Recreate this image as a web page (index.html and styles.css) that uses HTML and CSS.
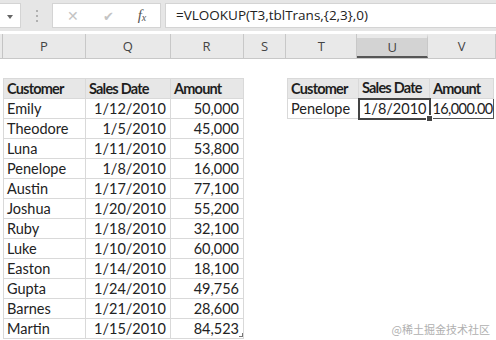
FILE: index.html
```html
<!DOCTYPE html>
<html lang="en">
<head>
  <meta charset="UTF-8" />
  <title>VLOOKUP sheet</title>
  <link rel="stylesheet" href="styles.css">
</head>
<body>
  <div class="formula-bar">
    <div class="name-box"><span class="arrow"></span></div>
    <div class="grip"><i></i><i></i><i></i></div>
    <div class="buttons">
      <span class="btn cancel">&#x2715;</span>
      <span class="btn enter">&#x2714;</span>
      <span class="btn fx">f<sub>x</sub></span>
    </div>
    <div class="formula">=VLOOKUP(T3,tblTrans,{2,3},0)</div>
  </div>

  <div class="col-heads">
    <div class="corner"></div>
    <div class="col w-p">P</div>
    <div class="col w-q">Q</div>
    <div class="col w-r">R</div>
    <div class="col w-s">S</div>
    <div class="col w-t">T</div>
    <div class="col w-u active">U</div>
    <div class="col w-v">V</div>
  </div>

  <div class="sheet">
    <table class="data left">
      <colgroup><col class="c-p"><col class="c-q"><col class="c-r"></colgroup>
      <tr><th>Customer</th><th>Sales Date</th><th>Amount</th></tr>
      <tr><td>Emily</td><td class="num">1/12/2010</td><td class="num">50,000</td></tr>
      <tr><td>Theodore</td><td class="num">1/5/2010</td><td class="num">45,000</td></tr>
      <tr><td>Luna</td><td class="num">1/11/2010</td><td class="num">53,800</td></tr>
      <tr><td>Penelope</td><td class="num">1/8/2010</td><td class="num">16,000</td></tr>
      <tr><td>Austin</td><td class="num">1/17/2010</td><td class="num">77,100</td></tr>
      <tr><td>Joshua</td><td class="num">1/20/2010</td><td class="num">55,200</td></tr>
      <tr><td>Ruby</td><td class="num">1/18/2010</td><td class="num">32,100</td></tr>
      <tr><td>Luke</td><td class="num">1/10/2010</td><td class="num">60,000</td></tr>
      <tr><td>Easton</td><td class="num">1/14/2010</td><td class="num">18,100</td></tr>
      <tr><td>Gupta</td><td class="num">1/24/2010</td><td class="num">49,756</td></tr>
      <tr><td>Barnes</td><td class="num">1/21/2010</td><td class="num">28,600</td></tr>
      <tr><td>Martin</td><td class="num">1/15/2010</td><td class="num">84,523<span class="resize"></span></td></tr>
    </table>

    <table class="data right">
      <colgroup><col class="c-t"><col class="c-u"><col class="c-v"></colgroup>
      <tr><th>Customer</th><th>Sales Date</th><th>Amount</th></tr>
      <tr><td>Penelope</td><td class="num selected">1/8/2010<span class="handle"></span></td><td class="num result">16,000.00</td></tr>
    </table>
  </div>

  <div class="watermark">@稀土掘金技术社区</div>
</body>
</html>
```

FILE: styles.css
```css
body {
  margin: 0;
  width: 496px;
  height: 340px;
  overflow: hidden;
  background: #fff;
  font-family: "Lato", "Liberation Sans", sans-serif;
  color: #222;
  position: relative;
}
.formula-bar {
  display: flex;
  align-items: stretch;
  height: 25px;
  padding: 3px 0 3px;
  background: #e6e6e6;
}
.name-box {
  width: 20px;
  background: #fff;
  border: 1px solid #d4d4d4;
  border-left: none;
  position: relative;
}
.arrow {
  position: absolute;
  left: 7px;
  top: 11px;
  border-left: 3px solid transparent;
  border-right: 3px solid transparent;
  border-top: 4px solid #666;
}
.grip {
  width: 31px;
  display: flex;
  flex-direction: column;
  align-items: center;
  justify-content: center;
  gap: 3px;
}
.grip i {
  width: 2px;
  height: 2px;
  background: #b0b0b0;
}
.buttons {
  width: 107px;
  background: #fff;
  border: 1px solid #d4d4d4;
  display: flex;
  align-items: center;
}
.btn {
  color: #c4c4c4;
  text-align: center;
}
.cancel { width: 36px; margin-left: 2px; font-size: 14px; }
.enter { width: 34px; font-size: 13px; }
.fx {
  width: 34px;
  color: #555;
  font-family: "Liberation Serif", serif;
  font-style: italic;
  font-size: 15px;
}
.fx sub { font-size: 10px; vertical-align: -1px; }
.formula {
  flex: 1;
  margin-left: 4px;
  background: #fff;
  border: 1px solid #d4d4d4;
  border-right: none;
  padding-left: 10px;
  line-height: 23px;
  font-family: "Open Sans", sans-serif;
  font-size: 13.5px;
  color: #222;
}
.col-heads {
  display: flex;
  height: 24px;
  margin-top: 3px;
  background: #e9e9e9;
  border-bottom: 1px solid #c8c8c8;
}
.corner { width: 3px; border-right: 1px solid #c4c4c4; box-sizing: border-box; }
.col {
  box-sizing: border-box;
  border-right: 1px solid #c8c8c8;
  text-align: center;
  line-height: 24px;
  font-family: "Open Sans", sans-serif;
  font-size: 13px;
  color: #444;
}
.col.active {
  background: #d3d3d3;
  border-bottom: 2px solid #555;
  border-top: 4px solid #e9e9e9;
  line-height: 18px;
}
.w-p { width: 83px; }
.w-q { width: 85px; }
.w-r { width: 73px; }
.w-s { width: 43px; }
.w-t { width: 71px; }
.w-u { width: 71px; }
.w-v { width: 68px; }
.sheet {
  display: flex;
  align-items: flex-start;
  padding: 19px 0 0 3px;
  gap: 43px;
}
.data {
  border-collapse: collapse;
  table-layout: fixed;
  font-size: 14.5px;
  flex: none;
}
.left { width: 240px; }
.right { width: 206px; }
.c-p { width: 82px; }
.c-q { width: 85px; }
.c-r { width: 73px; }
.c-t { width: 71px; }
.c-u { width: 71px; }
.c-v { width: 64px; }
.data th,
.data td {
  box-sizing: border-box;
  height: 20px;
  padding: 0 4px 0 3px;
  border: 1px solid #d9d9d9;
  white-space: nowrap;
  line-height: 18px;
  overflow: visible;
}
.data th {
  background: #e7e7e7;
  font-weight: bold;
  text-align: left;
  color: #1e1e1e;
  letter-spacing: -0.8px;
}
.data td.num { text-align: right; }
.data td { position: relative; }
.data td.selected {
  border: 2px solid #444;
  padding-right: 2px;
}
.data td.result {
  border: 1px solid #555;
  padding: 0 2px 0 2px;
  letter-spacing: -0.6px;
}
.handle {
  position: absolute;
  right: -4px;
  bottom: -4px;
  width: 5px;
  height: 5px;
  background: #444;
  border: 1px solid #fff;
  z-index: 2;
}
.resize {
  position: absolute;
  right: 0;
  bottom: 1px;
  width: 3px;
  height: 3px;
  border-right: 1px solid #777;
  border-bottom: 1px solid #777;
}
.watermark {
  position: absolute;
  right: 6px;
  bottom: 3px;
  font-family: "Noto Sans CJK SC", sans-serif;
  font-size: 11px;
  color: #b0b0b0;
}
```
